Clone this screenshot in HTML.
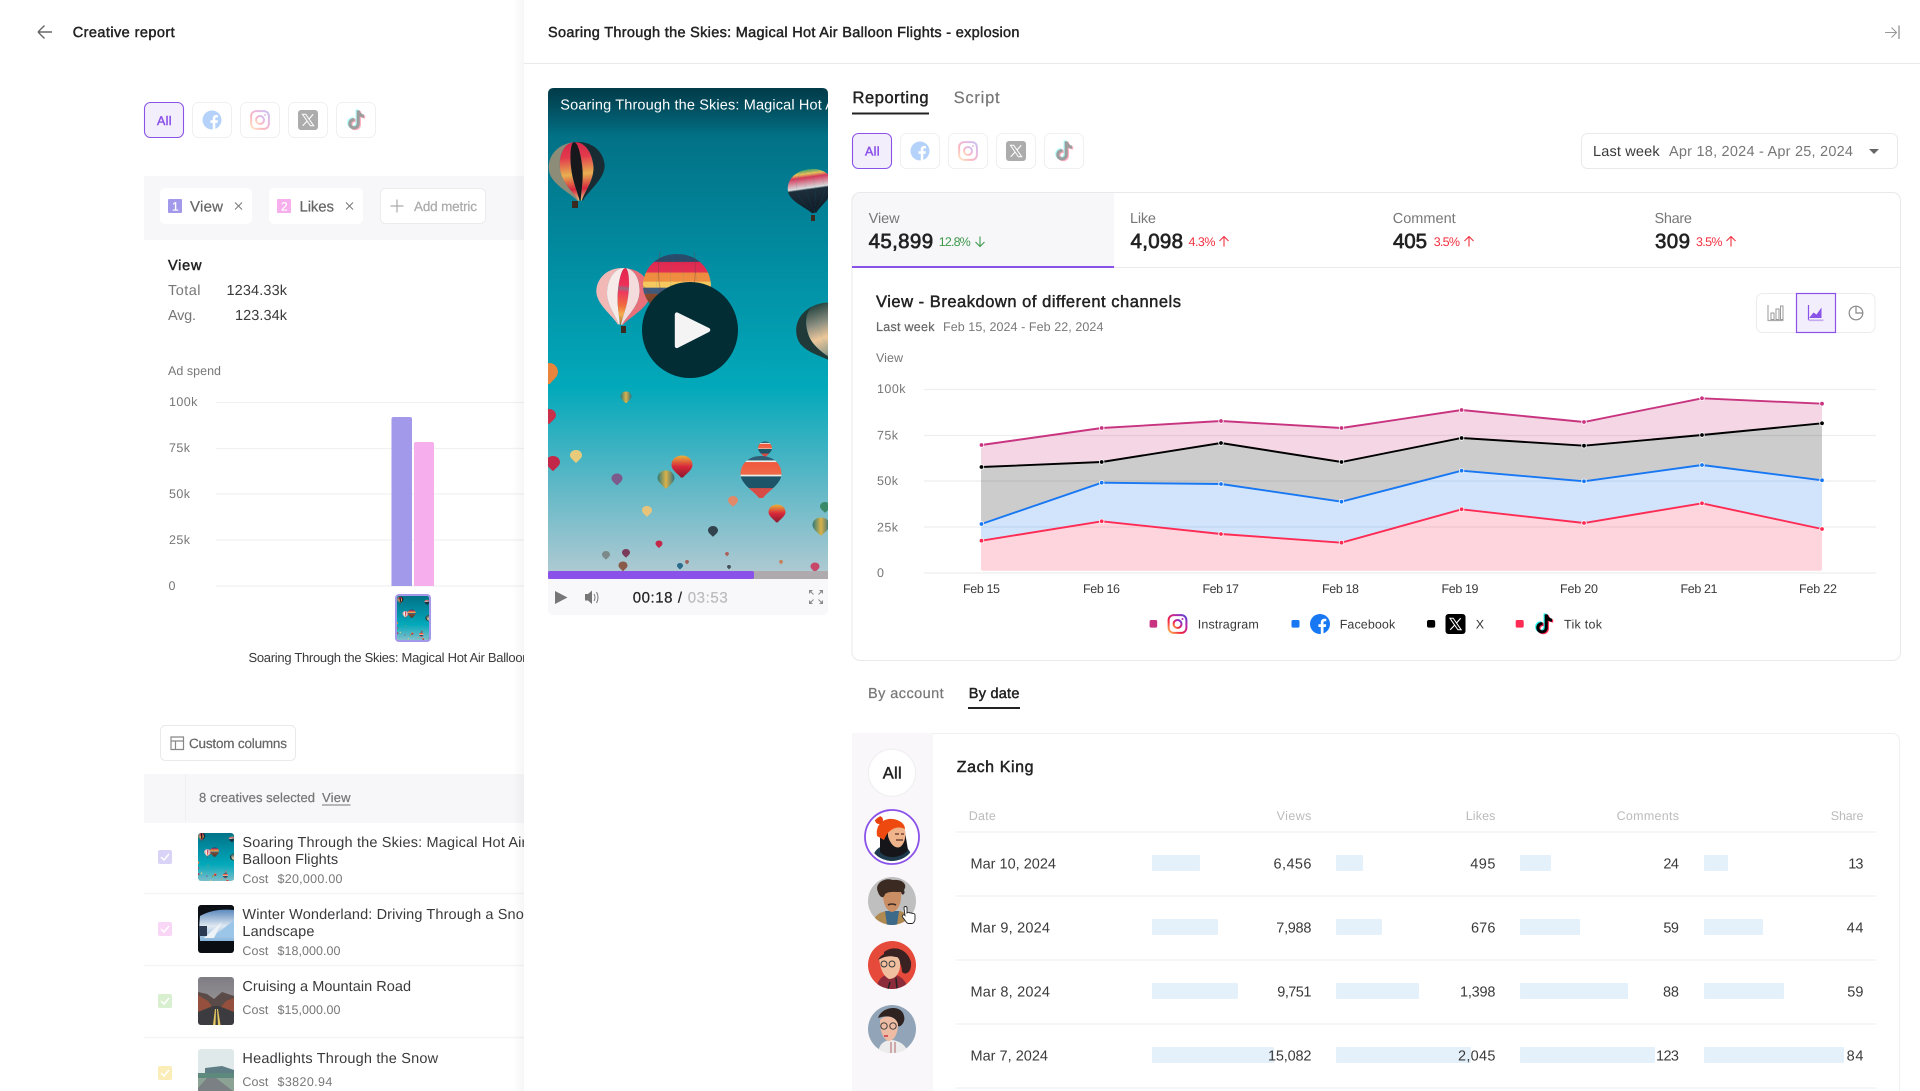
<!DOCTYPE html>
<html lang="en"><head><meta charset="utf-8"><title>Creative report</title>
<style>
html,body{margin:0;padding:0;background:#fff;width:1920px;height:1091px;overflow:hidden}
svg.page{display:block;position:absolute;left:0;top:0}
text{font-family:"Liberation Sans",sans-serif;fill:currentColor;stroke:currentColor;stroke-width:0;text-rendering:geometricPrecision}
.m{stroke-width:.22px}.b{stroke-width:.46px}
.k{color:#222}.d{color:#3a3a3c}.g{color:#777}.l{color:#aaa}.u{color:#bbb}.h{color:#666}
.f12{font-size:12.5px}.f13{font-size:13.5px}.f14{font-size:14.5px}.f15{font-size:15px}.f16{font-size:16.5px}.f20{font-size:20.5px;stroke-width:.7px}
</style></head><body>
<svg class="page" xmlns="http://www.w3.org/2000/svg" width="1920" height="1091" viewBox="0 0 1920 1091">
<defs>
<linearGradient id="sky" x1="0" y1="0" x2="0" y2="1"><stop offset="0" stop-color="#02566a"/><stop offset=".1" stop-color="#027186"/><stop offset=".4" stop-color="#0291a6"/><stop offset=".62" stop-color="#02a9ba"/><stop offset=".8" stop-color="#55b6c5"/><stop offset="1" stop-color="#adc9d2"/></linearGradient>
<linearGradient id="top" x1="0" y1="0" x2="0" y2="1"><stop offset="0" stop-color="#000" stop-opacity=".32"/><stop offset="1" stop-color="#000" stop-opacity="0"/></linearGradient>
<linearGradient id="rb" x1="0" y1="0" x2="0" y2="1"><stop offset="0" stop-color="#d9264a"/><stop offset=".25" stop-color="#e23a4c"/><stop offset=".55" stop-color="#e8b050"/><stop offset=".8" stop-color="#d9263e"/><stop offset="1" stop-color="#e8c880"/></linearGradient>
<linearGradient id="pk" x1="0" y1="0" x2="0" y2="1"><stop offset="0" stop-color="#e2264e"/><stop offset=".3" stop-color="#ee2f58"/><stop offset=".36" stop-color="#9a6a80"/><stop offset=".42" stop-color="#ee3860"/><stop offset=".66" stop-color="#f06a3c"/><stop offset=".82" stop-color="#f4b04c"/><stop offset="1" stop-color="#a07040"/></linearGradient>
<linearGradient id="st" x1="0" y1="0" x2="0" y2="1"><stop offset="0" stop-color="#2a4a6a"/><stop offset=".1" stop-color="#2a4a6a"/><stop offset=".11" stop-color="#e12850"/><stop offset=".24" stop-color="#e22f52"/><stop offset=".25" stop-color="#ee8a40"/><stop offset=".36" stop-color="#ef8f40"/><stop offset=".37" stop-color="#f6c860"/><stop offset=".44" stop-color="#f6c860"/><stop offset=".45" stop-color="#3f5a7c"/><stop offset=".52" stop-color="#3f5a7c"/><stop offset=".53" stop-color="#8a4c2c"/><stop offset="1" stop-color="#54261c"/></linearGradient>
<linearGradient id="rn" x1="0" y1="0" x2="0" y2="1"><stop offset="0" stop-color="#3aa06a"/><stop offset=".1" stop-color="#e8c05a"/><stop offset=".18" stop-color="#d43a5a"/><stop offset=".42" stop-color="#d9dcde"/><stop offset=".46" stop-color="#1d2e3b"/><stop offset="1" stop-color="#0f1b26"/></linearGradient>
<linearGradient id="dk" x1="0" y1="0" x2="0" y2="1"><stop offset="0" stop-color="#26443e"/><stop offset=".3" stop-color="#8a8d80"/><stop offset=".55" stop-color="#eec89a"/><stop offset=".8" stop-color="#9aa08c"/><stop offset="1" stop-color="#3a3a34"/></linearGradient>
<linearGradient id="b6" x1="0" y1="0" x2="0" y2="1"><stop offset="0" stop-color="#2f5f74"/><stop offset=".1" stop-color="#2f5f74"/><stop offset=".11" stop-color="#e8f0ec"/><stop offset=".14" stop-color="#e8f0ec"/><stop offset=".15" stop-color="#f0583e"/><stop offset=".44" stop-color="#ee6a48"/><stop offset=".45" stop-color="#e8ece4"/><stop offset=".48" stop-color="#e8ece4"/><stop offset=".49" stop-color="#1d5468"/><stop offset=".76" stop-color="#1d5468"/><stop offset=".77" stop-color="#d84c48"/><stop offset="1" stop-color="#d84c48"/></linearGradient>
<linearGradient id="b7" x1="0" y1="0" x2="0" y2="1"><stop offset="0" stop-color="#e8b43a"/><stop offset=".5" stop-color="#d8283a"/><stop offset="1" stop-color="#8a1c30"/></linearGradient>
<linearGradient id="b8" x1="0" y1="0" x2="1" y2="0"><stop offset="0" stop-color="#2f7a78"/><stop offset=".5" stop-color="#d9b24a"/><stop offset="1" stop-color="#34707c"/></linearGradient>
<linearGradient id="ig" x1="0" y1="1" x2="1" y2="0"><stop offset="0" stop-color="#fec053"/><stop offset=".35" stop-color="#f2203e"/><stop offset=".7" stop-color="#b729a8"/><stop offset="1" stop-color="#5342d6"/></linearGradient>
<linearGradient id="ps" x1="0" y1="0" x2="1" y2="0"><stop offset="0" stop-color="#000" stop-opacity="0"/><stop offset="1" stop-color="#000" stop-opacity=".035"/></linearGradient>
<linearGradient id="sn" x1="0" y1="0" x2="0" y2="1"><stop offset="0" stop-color="#4e7fb8"/><stop offset=".55" stop-color="#dfe9f2"/><stop offset="1" stop-color="#86b4dd"/></linearGradient>
<linearGradient id="rd" x1="0" y1="0" x2="0" y2="1"><stop offset="0" stop-color="#7f7d84"/><stop offset="1" stop-color="#a9a3a2"/></linearGradient>

<path id="bp" d="M0-10C6-10 10-6 10-1 10 4 3 8 1 11L-1 11C-3 8-10 4-10-1-10-6-6-10 0-10Z"/>
<path id="g1" d="M0-10C-3.6-10-6-6-6-1C-6 4-1.800 8-.6 11L-1 11C-3 8-10 4-10-1C-10-6-6-10 0-10Z"/>
<path id="g2" d="M0-10C-1.200-10-2-6-2-1C-2 4-.6 8-.2 11L-.6 11C-1.800 8-6 4-6-1C-6-6-3.600-10 0-10Z"/>
<path id="g3" d="M0-10C1.200-10 2-6 2-1C2 4 .6 8 .2 11L-.2 11C-.6 8-2 4-2-1C-2-6-1.200-10 0-10Z"/>
<path id="g4" d="M0-10C3.600-10 6-6 6-1C6 4 1.800 8 .6 11L.2 11C.6 8 2 4 2-1C2-6 1.200-10 0-10Z"/>
<path id="g5" d="M0-10C6-10 10-6 10-1C10 4 3 8 1 11L.6 11C1.800 8 6 4 6-1C6-6 3.600-10 0-10Z"/>
<symbol id="fb" viewBox="0 0 20 20"><circle cx="10" cy="10" r="10" fill="#1877f2"/><path fill="#fff" d="M13.5 20v-7h2.300l.4-2.800h-2.700V8.600c0-.8.3-1.300 1.400-1.300h1.400V4.900c-.3 0-1.100-.1-2-.1-2.100 0-3.500 1.300-3.500 3.600v1.800H8.400V13h2.400v7z"/></symbol>
<symbol id="in" viewBox="0 0 20 20"><rect x="1.100" y="1.100" width="17.800" height="17.800" rx="5" fill="#fff" stroke="url(#ig)" stroke-width="2"/><circle cx="10" cy="10" r="4" fill="none" stroke="url(#ig)" stroke-width="2"/><circle cx="15" cy="5" r="1" fill="#b729a8"/></symbol>
<symbol id="xx" viewBox="0 0 20 20"><rect width="20" height="20" rx="3" fill="#000"/><path d="M4.400 4.200h3.300l8 11.600h-3.300z" fill="none" stroke="#fff" stroke-width="1"/><path d="M15.200 4.200l-4.400 5M9 11.200l-4.300 4.600" fill="none" stroke="#fff" stroke-width="1.100"/></symbol>
<path id="tkp" d="M10.600 1.600h2.700c.2 2 1.600 3.500 3.700 3.700v2.700c-1.400 0-2.700-.4-3.700-1.200v6.400c0 3-2.300 5-5 5s-5-2-5-5 2.600-5.200 5.400-4.800v2.800c-1.400-.4-2.700.6-2.700 2s1 2.300 2.300 2.300 2.300-1 2.300-2.400z"/>
<symbol id="tk" viewBox="0 0 20 20"><use href="#tkp" fill="#25f4ee" transform="translate(-1 -.7)"/><use href="#tkp" fill="#fe2c55" transform="translate(1 .7)"/><use href="#tkp" fill="#000"/></symbol>

<g id="scene">
<rect x="548" y="88" width="280" height="483" fill="url(#sky)"/>
<rect x="548" y="88" width="280" height="48" fill="url(#top)"/>
<!-- big dark balloon -->
<g transform="translate(577 170) rotate(-6) scale(2.8)"><use href="#g1" fill="#8c8c78"/><use href="#g2" fill="url(#rb)"/><use href="#g3" fill="#17181b"/><use href="#g4" fill="url(#rb)"/><use href="#g5" fill="#1a2c33"/></g>
<rect x="572" y="201" width="6" height="7" fill="#3a2a20"/>
<!-- top right -->
<g transform="translate(811 190) rotate(-8) scale(2.3 2.1)"><use href="#g1" fill="url(#rn)"/><use href="#g2" fill="url(#rn)"/><use href="#g3" fill="url(#rn)"/><use href="#g4" fill="url(#rn)"/><use href="#g5" fill="url(#rn)"/></g>
<rect x="811" y="215" width="4" height="6" fill="#3a2a20"/>
<!-- white pink -->
<g transform="translate(623 295) rotate(5) scale(2.7)"><use href="#g1" fill="#f2b8b6"/><use href="#g2" fill="#f6ebe8"/><use href="#g3" fill="url(#pk)"/><use href="#g4" fill="#f4dcdc"/><use href="#g5" fill="#e8707a"/></g>
<rect x="621" y="326" width="5" height="7" fill="#3a2a20"/>
<!-- striped -->
<g transform="translate(677 290) scale(3.4 3.600)"><use href="#g1" fill="url(#st)"/><use href="#g2" fill="url(#st)"/><use href="#g3" fill="url(#st)"/><use href="#g4" fill="url(#st)"/><use href="#g5" fill="url(#st)"/></g>
<path d="M660 252Q654 284 671 328M694 252Q700 284 681 328M643 286Q660 300 676 332M711 286Q694 300 678 332" stroke="#7a3a3a" stroke-opacity=".35" fill="none"/>
<!-- right dark -->
<g transform="translate(826 332) rotate(-20) scale(2.9)"><use href="#g1" fill="#1f3a38"/><use href="#g2" fill="url(#dk)"/><use href="#g3" fill="url(#dk)"/><use href="#g4" fill="url(#dk)"/><use href="#g5" fill="url(#dk)"/></g>
<use href="#bp" fill="#e8843c" transform="translate(549 373) scale(.9 1)"/>
<use href="#bp" fill="url(#b8)" transform="translate(626 397) scale(.55)"/>
<use href="#bp" fill="#c9304a" transform="translate(549 416) scale(.7)"/>
<use href="#bp" fill="#c42848" transform="translate(553 463) scale(.7)"/>
<use href="#bp" fill="#e8cb7a" transform="translate(576 456) scale(.6)"/>
<use href="#bp" fill="#7d5a8c" transform="translate(617 479) scale(.55)"/>
<use href="#bp" fill="url(#b8)" transform="translate(666 479) scale(.85)"/>
<use href="#bp" fill="url(#b7)" transform="translate(682 466) scale(1.050)"/>
<use href="#bp" fill="url(#b6)" transform="translate(765 449) scale(.7 .75)"/>
<use href="#bp" fill="url(#b6)" transform="translate(761 476) scale(2.050 2)"/>
<use href="#bp" fill="#e08a6a" transform="translate(733 501) scale(.5)"/>
<use href="#bp" fill="url(#b7)" transform="translate(777 513) scale(.85)"/>
<use href="#bp" fill="#e8c47a" transform="translate(647 511) scale(.5)"/>
<use href="#bp" fill="#32424e" transform="translate(713 531) scale(.5)"/>
<use href="#bp" fill="url(#b8)" transform="translate(821 526) scale(.85)"/>
<use href="#bp" fill="#3a8a6a" transform="translate(825 507) scale(.5)"/>
<use href="#bp" fill="#c42848" transform="translate(659 544) scale(.35)"/>
<use href="#bp" fill="#7a3a5a" transform="translate(626 553) scale(.4)"/>
<use href="#bp" fill="#7d8a8a" transform="translate(606 555) scale(.4)"/>
<use href="#bp" fill="#8a5a4a" transform="translate(623 566) scale(.45)"/>
<use href="#bp" fill="#2a6a8a" transform="translate(680 566) scale(.3)"/>
<use href="#bp" fill="#c8486a" transform="translate(815 567) scale(.45)"/>
<use href="#bp" fill="#b0605a" transform="translate(727 554) scale(.2)"/>
<use href="#bp" fill="#c8805a" transform="translate(781 562) scale(.2)"/>
<use href="#bp" fill="#44505a" transform="translate(729 567) scale(.2)"/>
<use href="#bp" fill="#a0605a" transform="translate(687 562) scale(.2)"/>
</g>
<clipPath id="lc"><rect x="0" y="0" width="524" height="1091"/></clipPath>
<clipPath id="vc"><path d="M554 88H822Q828 88 828 94V571H548V94Q548 88 554 88Z"/></clipPath>
<clipPath id="vt"><rect x="548" y="88" width="280" height="40"/></clipPath>
<clipPath id="t0"><rect x="397" y="596" width="32" height="44" rx="2"/></clipPath>
<clipPath id="t1"><rect x="198" y="833" width="36" height="48" rx="3"/></clipPath>
<clipPath id="t2"><rect x="198" y="905" width="36" height="48" rx="3"/></clipPath>
<clipPath id="t3"><rect x="198" y="977" width="36" height="48" rx="3"/></clipPath>
<clipPath id="t4"><rect x="198" y="1049" width="36" height="48" rx="3"/></clipPath>
<clipPath id="a1"><circle cx="892" cy="837" r="24"/></clipPath>
<clipPath id="a2"><circle cx="892" cy="901" r="24"/></clipPath>
<clipPath id="a3"><circle cx="892" cy="965" r="24"/></clipPath>
<clipPath id="a4"><circle cx="892" cy="1029" r="24"/></clipPath>
</defs>

<rect width="1920" height="1091" fill="#fff"/>

<!-- LEFT PANEL -->
<g clip-path="url(#lc)">
<path d="M52 32H38M38 32l6.500-6.500M38 32l6.500 6.500" fill="none" stroke="#666" stroke-width="1.400"/>
<text x="72.700" y="37" class="f14 b k" textLength="102">Creative report</text>

<rect x="144.500" y="102.500" width="39" height="35" rx="6" fill="#f3eefb" stroke="#8a52e9" stroke-width="1.100"/>
<text x="157" y="125" class="f12 b" style="color:#8a52e9" textLength="14.500">All</text>
<rect x="192.500" y="102.500" width="39" height="35" rx="6" fill="#fff" stroke="#f0eff1"/>
<rect x="240.500" y="102.500" width="39" height="35" rx="6" fill="#fff" stroke="#f0eff1"/>
<rect x="288.500" y="102.500" width="39" height="35" rx="6" fill="#fff" stroke="#f0eff1"/>
<rect x="336.500" y="102.500" width="39" height="35" rx="6" fill="#fff" stroke="#f0eff1"/>
<use href="#fb" x="202.500" y="110.500" width="19" height="19" opacity=".32"/>
<use href="#in" x="250" y="110" width="20" height="20" opacity=".32"/>
<use href="#xx" x="298" y="110" width="20" height="20" opacity=".32"/>
<use href="#tk" x="344.500" y="108.500" width="23" height="23" opacity=".38"/>

<rect x="144" y="176" width="380" height="64" fill="#f7f6f8"/>
<rect x="160" y="188" width="92" height="36" rx="5" fill="#fff"/>
<rect x="269" y="188" width="94" height="36" rx="5" fill="#fff"/>
<rect x="380.500" y="188.500" width="105" height="35" rx="5" fill="#fff" stroke="#ececee"/>
<rect x="168" y="199" width="14" height="14" rx="1" fill="#a399ea"/><text x="172" y="210.500" style="font-size:12px;color:#fff" class="m">1</text>
<rect x="277" y="199" width="14" height="14" rx="1" fill="#f6aeec"/><text x="281" y="210.500" style="font-size:12px;color:#fff" class="m">2</text>
<text x="190" y="211.500" class="f15 m h" textLength="33">View</text>
<text x="299.500" y="211.500" class="f15 m h" textLength="34.500">Likes</text>
<path d="M235 202.500l7 7M242 202.500l-7 7M346 202.500l7 7M353 202.500l-7 7" stroke="#777" stroke-width="1" fill="none"/>
<path d="M397 199.500v13M390.500 206h13" stroke="#aaa" stroke-width="1.200" fill="none"/>
<text x="414" y="211" class="f13 m l" textLength="63">Add metric</text>

<text x="168" y="270" class="f14 b k" textLength="33.500">View</text>
<text x="168" y="295" class="f14 g" textLength="32.500">Total</text>
<text x="226.500" y="295" class="f14 d" textLength="60.500">1234.33k</text>
<text x="168" y="320" class="f14 g" textLength="28">Avg.</text>
<text x="235" y="320" class="f14 d" textLength="52">123.34k</text>

<text x="168" y="375" class="f12 g" textLength="53">Ad spend</text>
<g stroke="#f1f1f2" stroke-width="1.200"><path d="M216 402.500H524M216 448.500H524M216 494H524M216 540H524M216 586H524"/></g>
<g class="f12 g"><text x="169" y="406" textLength="28.400">100k</text><text x="169" y="452" textLength="21">75k</text><text x="169" y="498" textLength="21">50k</text><text x="169" y="544" textLength="21">25k</text><text x="168.500" y="590" textLength="6.500">0</text></g>
<path d="M391.500 586V419q0-2 2-2h16.500q2 0 2 2V586Z" fill="#a399ea"/>
<path d="M414 586V444q0-2 2-2h16q2 0 2 2V586Z" fill="#f6aeec"/>
<g clip-path="url(#t0)"><svg x="397" y="596" width="32" height="44" viewBox="548 88 280 483" preserveAspectRatio="xMidYMid slice"><use href="#scene"/></svg></g>
<rect x="396" y="595" width="34" height="46" rx="3" fill="none" stroke="#a399ea" stroke-width="2"/>
<text x="248.500" y="662" class="f13 d" style="font-size:13px" textLength="281">Soaring Through the Skies: Magical Hot Air Balloon</text>

<rect x="160.500" y="725.500" width="135" height="35" rx="5" fill="#fff" stroke="#e9e9eb"/>
<path d="M171 737h12.500v12.500H171zM171 741h12.500M175.500 741v8.500" fill="none" stroke="#888" stroke-width="1.200"/>
<text x="189" y="748" class="f13 m h" textLength="98">Custom columns</text>

<rect x="144" y="774" width="380" height="49" fill="#f7f6f8"/>
<path d="M185.500 774V821" stroke="#efeef0" fill="none"/>
<text x="199" y="802" class="f13 m g" style="font-size:13px" textLength="116">8 creatives selected</text>
<text x="322" y="802" class="f13 m g" style="font-size:13px" textLength="28.500">View</text>
<path d="M322 805H350.500" stroke="#777" fill="none"/>

<g stroke="#f5f4f6" stroke-width="1.500"><path d="M144 893.500H524M144 965.500H524M144 1037.500H524"/></g>
<rect x="158" y="850" width="14" height="14" rx="2" fill="#d9d3f7"/><path d="M161 857l3 3 5-6" stroke="#fff" stroke-width="1.500" fill="none"/>
<rect x="158" y="922" width="14" height="14" rx="2" fill="#fad6f6"/><path d="M161 929l3 3 5-6" stroke="#fff" stroke-width="1.500" fill="none"/>
<rect x="158" y="994" width="14" height="14" rx="2" fill="#d8efd0"/><path d="M161 1001l3 3 5-6" stroke="#fff" stroke-width="1.500" fill="none"/>
<rect x="158" y="1066" width="14" height="14" rx="2" fill="#faedb8"/><path d="M161 1073l3 3 5-6" stroke="#fff" stroke-width="1.500" fill="none"/>

<g clip-path="url(#t1)"><svg x="198" y="833" width="36" height="48" viewBox="548 88 280 483" preserveAspectRatio="xMidYMid slice"><use href="#scene"/></svg></g>
<g clip-path="url(#t2)"><rect x="198" y="905" width="36" height="48" fill="#0a0d12"/><path d="M199 919Q200 912 208 911L234 908V941H200Z" fill="url(#sn)"/><path d="M198 911Q214 905 234 906V910Q214 908 200 916L198 940Z" fill="#0c1118"/><path d="M214 936L234 920V938Z" fill="#9cc6e8"/><path d="M204 938L222 922L214 938Z" fill="#eef3f8"/><rect x="199" y="926" width="8" height="10" fill="#2a3a52"/></g>
<g clip-path="url(#t3)"><rect x="198" y="977" width="36" height="48" fill="url(#rd)"/><path d="M198 992L207 994L214 999L222 992L234 996V1012H198Z" fill="#5a4a48"/><path d="M198 995L208 1001L213 1008H220L226 1001L234 998V1012H198Z" fill="#94503c"/><path d="M198 1012L213 1006H219L234 1012V1025H198Z" fill="#3c3c40"/><path d="M215 1009L213 1025H215.500L216 1009ZM217 1009L218 1025H220.500L218 1009Z" fill="#e8c860"/></g>
<g clip-path="url(#t4)"><rect x="198" y="1049" width="36" height="48" fill="#dfe9ea"/><path d="M205 1068L222 1066L234 1070V1078H205Z" fill="#5f7d84"/><rect x="198" y="1073" width="36" height="6" fill="#5d8a7c"/><path d="M198 1078H234V1097H198Z" fill="#8ba294"/><path d="M207 1078H216L234 1092V1097H198V1088Z" fill="#7a8083"/></g>

<text x="242.400" y="847" class="f14 d" textLength="284">Soaring Through the Skies: Magical Hot Air</text>
<text x="242.400" y="864" class="f14 d" textLength="95.700">Balloon Flights</text>
<text x="242.400" y="883" class="f12 g" textLength="26">Cost</text><text x="277.500" y="883" class="f12 g" textLength="65">$20,000.00</text>
<text x="242.400" y="919" class="f14 d" textLength="292">Winter Wonderland: Driving Through a Snow</text>
<text x="242.400" y="936" class="f14 d" textLength="72">Landscape</text>
<text x="242.400" y="955" class="f12 g" textLength="26">Cost</text><text x="277.500" y="955" class="f12 g" textLength="63">$18,000.00</text>
<text x="242.400" y="991" class="f14 d" textLength="168.700">Cruising a Mountain Road</text>
<text x="242.400" y="1014" class="f12 g" textLength="26">Cost</text><text x="277.500" y="1014" class="f12 g" textLength="63">$15,000.00</text>
<text x="242.400" y="1063" class="f14 d" textLength="195.700">Headlights Through the Snow</text>
<text x="242.400" y="1086" class="f12 g" textLength="26">Cost</text><text x="277.500" y="1086" class="f12 g" textLength="54.800">$3820.94</text>
</g>
<rect x="512" y="0" width="12" height="1091" fill="url(#ps)"/>

<!-- RIGHT PANEL -->
<path d="M524 63.500H1920" stroke="#e9e9eb" fill="none"/>
<text x="548" y="37" class="f14 b k" textLength="471.500">Soaring Through the Skies: Magical Hot Air Balloon Flights - explosion</text>
<path d="M1885 32.500H1896M1891.500 27.500l5 5-5 5" stroke="#999" stroke-width="1.100" fill="none"/><path d="M1899 25.500V39" stroke="#999" stroke-width="1.400" fill="none"/>

<!-- video -->
<g clip-path="url(#vc)"><use href="#scene"/></g>
<g clip-path="url(#vt)"><text x="560.300" y="109.500" class="f14" style="color:#fff" textLength="283">Soaring Through the Skies: Magical Hot Air</text></g>
<circle cx="690" cy="330" r="48" fill="#032d35"/>
<path d="M677.500 312.500L709 328a2.200 2.200 0 010 4L677.500 348a2 2 0 01-2.700-1.900V314.400a2 2 0 012.700-1.900Z" fill="#f4f4f5"/>
<path d="M548 579H828V609Q828 615 822 615H554Q548 615 548 609Z" fill="#f8f7f9"/>
<rect x="548" y="571" width="280" height="8" fill="#aeaaae"/>
<rect x="548" y="571" width="206" height="8" rx="2" fill="#8a52e9"/>
<path d="M555 591L567.500 597.500 555 604Z" fill="#777"/>
<path d="M585 594H588L592 590.500V604L588 600.500H585Z" fill="#777"/><path d="M594 594Q596 597.500 594 601M596.500 592Q599.500 597.500 596.500 603" stroke="#777" stroke-width="1" fill="none"/>
<text x="632.700" y="602.500" class="f15 m k" textLength="49.300">00:18 /</text>
<text x="687.700" y="602.500" class="f15 m u" textLength="40">03:53</text>
<path d="M809 590h4l-4 4zM823 590h-4l4 4zM809 604h4l-4-4zM823 604h-4l4-4z" fill="#8a8a8a"/><path d="M811 592l2.500 2.500M821 592l-2.500 2.500M811 602l2.500-2.500M821 602l-2.500-2.500" stroke="#8a8a8a" fill="none"/>

<!-- tabs -->
<text x="852.500" y="103" class="f16 b k" textLength="76">Reporting</text>
<text x="953.600" y="103" class="f16 m g" textLength="46">Script</text>
<rect x="852" y="112.500" width="77" height="2" fill="#222"/>

<rect x="852.500" y="133.500" width="39" height="35" rx="6" fill="#f3eefb" stroke="#8a52e9" stroke-width="1.100"/>
<text x="865" y="155.500" class="f12 b" style="color:#8a52e9" textLength="14.500">All</text>
<rect x="900.500" y="133.500" width="39" height="35" rx="6" fill="#fff" stroke="#f0eff1"/>
<rect x="948.500" y="133.500" width="39" height="35" rx="6" fill="#fff" stroke="#f0eff1"/>
<rect x="996.500" y="133.500" width="39" height="35" rx="6" fill="#fff" stroke="#f0eff1"/>
<rect x="1044.500" y="133.500" width="39" height="35" rx="6" fill="#fff" stroke="#f0eff1"/>
<use href="#fb" x="910.500" y="141.500" width="19" height="19" opacity=".32"/>
<use href="#in" x="958" y="141" width="20" height="20" opacity=".32"/>
<use href="#xx" x="1006" y="141" width="20" height="20" opacity=".32"/>
<use href="#tk" x="1052.500" y="139.500" width="23" height="23" opacity=".38"/>

<rect x="1581.500" y="133.500" width="316" height="35" rx="6" fill="#fff" stroke="#e9e9eb"/>
<text x="1593" y="156" class="f14 d" textLength="66.600">Last week</text>
<text x="1669" y="156" class="f14 g" textLength="184">Apr 18, 2024 - Apr 25, 2024</text>
<path d="M1869 149H1879L1874 154Z" fill="#666"/>

<!-- stats card -->
<path d="M1114 192.500H860Q852 192.500 852 200.500V267H1114Z" fill="#f7f6f8"/>
<rect x="852" y="192.500" width="1048.500" height="468" rx="8" fill="none" stroke="#e9e9eb"/>
<path d="M852 267.500H1900" stroke="#e9e9eb" fill="none"/>
<rect x="852" y="266" width="262" height="2" fill="#8a52e9"/>

<text x="868.600" y="223" class="f14 g" textLength="31">View</text>
<text x="868.600" y="248" class="f20 b k" textLength="64.500">45,899</text>
<text x="938.800" y="246" class="f12" style="color:#3f9a4d" textLength="32">12.8%</text>
<path d="M980 236.500V246.500M975.500 242l4.500 4.500 4.500-4.500" stroke="#3f9a4d" stroke-width="1.100" fill="none"/>
<text x="1130" y="223" class="f14 g" textLength="26">Like</text>
<text x="1130.500" y="248" class="f20 b k" textLength="52.500">4,098</text>
<text x="1188.500" y="246" class="f12" style="color:#f0313f" textLength="27">4.3%</text>
<path d="M1224 246.500V236.500M1219.500 241l4.500-4.500 4.500 4.500" stroke="#f0313f" stroke-width="1.100" fill="none"/>
<text x="1392.700" y="223" class="f14 g" textLength="63">Comment</text>
<text x="1393" y="248" class="f20 b k" textLength="34">405</text>
<text x="1433.700" y="246" class="f12" style="color:#f0313f" textLength="26.300">3.5%</text>
<path d="M1469 246.500V236.500M1464.500 241l4.500-4.500 4.500 4.500" stroke="#f0313f" stroke-width="1.100" fill="none"/>
<text x="1654.500" y="223" class="f14 g" textLength="37.500">Share</text>
<text x="1655" y="248" class="f20 b k" textLength="35">309</text>
<text x="1696" y="246" class="f12" style="color:#f0313f" textLength="26.500">3.5%</text>
<path d="M1731 246.500V236.500M1726.500 241l4.500-4.500 4.500 4.500" stroke="#f0313f" stroke-width="1.100" fill="none"/>

<text x="876" y="307" class="f16 b k" textLength="305">View - Breakdown of different channels</text>
<text x="876" y="331" class="f12 m h" textLength="58.500">Last week</text>
<text x="943" y="331" class="f12 g" textLength="160.400">Feb 15, 2024 - Feb 22, 2024</text>

<rect x="1756.500" y="293.500" width="118.500" height="39" rx="6" fill="#fff" stroke="#ececee"/>
<rect x="1796.500" y="293.500" width="39" height="39" fill="#f3eefb" stroke="#8a52e9" stroke-width="1.200"/>
<path d="M1768 305v15.500h15.500" stroke="#aaa" stroke-width="1.200" fill="none"/><path d="M1771 313h3v6.500h-3zM1776 309h3v10.500h-3zM1780.500 306h2.500v13.500h-2.500z" fill="none" stroke="#999" stroke-width="1"/>
<path d="M1808.500 305v15" stroke="#8a52e9" stroke-width="1.200" fill="none"/><path d="M1809.500 317.500l4-5 3 2 5-7V318h-12Z" fill="#8a52e9"/><rect x="1808.500" y="319.500" width="15" height="1.600" fill="#c4a8f2"/>
<circle cx="1856" cy="313" r="6.800" fill="none" stroke="#888" stroke-width="1.200"/><path d="M1856 306.200V313H1862.800" fill="none" stroke="#888" stroke-width="1.200"/>

<!-- chart -->
<text x="876" y="362" class="f12 g" textLength="27">View</text>
<g stroke="#eeeeef" stroke-width="1.200"><path d="M924 389.500H1876M924 435.500H1876M924 481H1876M924 527H1876M924 573H1876"/></g>
<g class="f12 g"><text x="877" y="393" textLength="28.500">100k</text><text x="877" y="439.500" textLength="21">75k</text><text x="877" y="485" textLength="21">50k</text><text x="877" y="531.500" textLength="21">25k</text><text x="877" y="577" textLength="6.500">0</text></g>

<path d="M981 445L1101.700 428 1221 421 1341.500 428 1461.600 410 1584 422 1702 398.300 1822 403.700V423.300L1702 435 1584 445.700 1461.600 438 1341.500 462 1221 443 1101.700 462 981 467Z" fill="#c8347f" fill-opacity=".2"/>
<path d="M981 467L1101.700 462 1221 443 1341.500 462 1461.600 438 1584 445.700 1702 435 1822 423.300V480.300L1702 465 1584 481.300 1461.600 470.700 1341.500 501.700 1221 484 1101.700 482.700 981 524Z" fill="#000" fill-opacity=".2"/>
<path d="M981 524L1101.700 482.700 1221 484 1341.500 501.700 1461.600 470.700 1584 481.300 1702 465 1822 480.300V529L1702 503.300 1584 523 1461.600 509.300 1341.500 542.700 1221 534 1101.700 521.300 981 540.700Z" fill="#1877f2" fill-opacity=".2"/>
<path d="M981 540.700L1101.700 521.300 1221 534 1341.500 542.700 1461.600 509.300 1584 523 1702 503.300 1822 529V568.700Q1822 570.700 1820 570.700H983Q981 570.700 981 568.700Z" fill="#fe2c55" fill-opacity=".2"/>
<g fill="none" stroke-width="1.900">
<polyline stroke="#c8347f" points="981.500,445 1101.700,428 1221,421 1341.500,428 1461.600,410 1584,422 1702,398.300 1822,403.700"/>
<polyline stroke="#000" points="981.500,467 1101.700,462 1221,443 1341.500,462 1461.600,438 1584,445.700 1702,435 1822,423.300"/>
<polyline stroke="#1877f2" points="981.500,524 1101.700,482.700 1221,484 1341.500,501.700 1461.600,470.700 1584,481.300 1702,465 1822,480.300"/>
<polyline stroke="#fe2c55" points="981.500,540.700 1101.700,521.300 1221,534 1341.500,542.700 1461.600,509.300 1584,523 1702,503.300 1822,529"/>
</g>
<g stroke="#fff" stroke-width=".8">
<g fill="#c8347f"><circle cx="981.500" cy="445" r="2.300"/><circle cx="1101.700" cy="428" r="2.300"/><circle cx="1221" cy="421" r="2.300"/><circle cx="1341.500" cy="428" r="2.300"/><circle cx="1461.600" cy="410" r="2.300"/><circle cx="1584" cy="422" r="2.300"/><circle cx="1702" cy="398.300" r="2.300"/><circle cx="1822" cy="403.700" r="2.300"/></g>
<g fill="#000"><circle cx="981.500" cy="467" r="2.300"/><circle cx="1101.700" cy="462" r="2.300"/><circle cx="1221" cy="443" r="2.300"/><circle cx="1341.500" cy="462" r="2.300"/><circle cx="1461.600" cy="438" r="2.300"/><circle cx="1584" cy="445.700" r="2.300"/><circle cx="1702" cy="435" r="2.300"/><circle cx="1822" cy="423.300" r="2.300"/></g>
<g fill="#1877f2"><circle cx="981.500" cy="524" r="2.300"/><circle cx="1101.700" cy="482.700" r="2.300"/><circle cx="1221" cy="484" r="2.300"/><circle cx="1341.500" cy="501.700" r="2.300"/><circle cx="1461.600" cy="470.700" r="2.300"/><circle cx="1584" cy="481.300" r="2.300"/><circle cx="1702" cy="465" r="2.300"/><circle cx="1822" cy="480.300" r="2.300"/></g>
<g fill="#fe2c55"><circle cx="981.500" cy="540.700" r="2.300"/><circle cx="1101.700" cy="521.300" r="2.300"/><circle cx="1221" cy="534" r="2.300"/><circle cx="1341.500" cy="542.700" r="2.300"/><circle cx="1461.600" cy="509.300" r="2.300"/><circle cx="1584" cy="523" r="2.300"/><circle cx="1702" cy="503.300" r="2.300"/><circle cx="1822" cy="529" r="2.300"/></g>
</g>
<g class="f12 d"><text x="963" y="593" textLength="37">Feb 15</text><text x="1083" y="593" textLength="37">Feb 16</text><text x="1202.500" y="593" textLength="36.500">Feb 17</text><text x="1322" y="593" textLength="37">Feb 18</text><text x="1441.500" y="593" textLength="37">Feb 19</text><text x="1560" y="593" textLength="38">Feb 20</text><text x="1680.500" y="593" textLength="37">Feb 21</text><text x="1799" y="593" textLength="38">Feb 22</text></g>

<rect x="1149.600" y="620" width="7.600" height="7.600" rx="1.500" fill="#c8347f"/><use href="#in" x="1167.500" y="614" width="20" height="20"/>
<text x="1197.800" y="628.500" class="f12 d" textLength="61">Instragram</text>
<rect x="1291.500" y="620" width="8" height="7.600" rx="1.500" fill="#1877f2"/><use href="#fb" x="1310" y="614" width="20" height="20"/>
<text x="1339.700" y="628.500" class="f12 d" textLength="55.500">Facebook</text>
<rect x="1427" y="620" width="8.200" height="7.600" rx="2" fill="#000"/><use href="#xx" x="1445.500" y="614" width="20" height="20"/>
<text x="1475.700" y="628.500" class="f12 d" textLength="7.500">X</text>
<rect x="1515.700" y="620" width="8" height="7.600" rx="1.500" fill="#fe2c55"/><use href="#tk" x="1532.500" y="612.500" width="23" height="23"/>
<text x="1564" y="628.500" class="f12 d" textLength="38">Tik tok</text>

<!-- sub tabs -->
<text x="868" y="698" class="f14 m g" textLength="75.700">By account</text>
<text x="968.800" y="698" class="f14 b k" textLength="50.600">By date</text>
<rect x="968" y="707" width="52" height="2" fill="#222"/>

<!-- table card -->
<path d="M932 1091V733.500H1891.500Q1899.500 733.500 1899.500 741.500V1091" fill="none" stroke="#f0eff1"/>
<path d="M852 733H932V1091H852Z" fill="#f9f7f9"/>
<circle cx="892" cy="772.700" r="23.500" fill="#fff" stroke="#eeedef"/>
<text x="882.700" y="778.500" class="f16 b k" textLength="19">All</text>

<circle cx="892" cy="837" r="27" fill="#fff" stroke="#8a52e9" stroke-width="1.800"/>
<g clip-path="url(#a1)">
<rect x="868" y="813" width="48" height="48" fill="#fff"/>
<path d="M872 861C873 850 880 846 886 845L905 846C910 850 912 855 912 861Z" fill="#1e3a4c"/>
<path d="M880 827L880 852C887 860 902 858 908 850L904 826Z" fill="#16161a"/>
<path d="M888 828L904 826C907 834 905 844 900 847 895 849 890 844 888 836Z" fill="#efb48c"/>
<path d="M877 836C875 823 886 816 897 820 903 822 905 826 905 829 897 825 888 829 884 840Z" fill="#ee4a10"/>
<circle cx="879" cy="820" r="4" fill="#e8420e"/>
<path d="M896 840h7M895 834h4M901 834h3" stroke="#5a2f20" stroke-width="1.200" fill="none"/>
</g>
<g clip-path="url(#a2)">
<rect x="868" y="877" width="48" height="48" fill="#bfbfc0"/>
<path d="M872 925C874 915 880 912 887 911L900 911C906 913 912 918 914 925Z" fill="#b08a50"/>
<path d="M885 911L899 911 897 925H887Z" fill="#3e6a8a"/>
<path d="M883 890C884 888 899 886 901 892 902 901 899 911 892 912 886 911 882 902 883 890Z" fill="#c98e63"/>
<path d="M878 892C874 884 884 877 893 880 902 879 908 884 904 890 906 894 902 897 901 892 895 892 889 891 885 894 884 899 880 898 878 892Z" fill="#3a2a22"/>
<path d="M888 905q4-2 8 0" stroke="#3a2a22" stroke-width="1.600" fill="none"/>
</g>
<path d="M904 908c0-2 3-2 3 0v5l1-.5c1-.5 2 0 2 .5 1-.5 2 0 2 .5 1-.5 3 0 3 1.500v4c0 2-1.500 4.500-3 4.500h-3.500c-1.500 0-2-1-3-2.500l-3-4c-1-1.500 1-3 2.500-1.500z" fill="#fff" stroke="#222" stroke-width=".9"/>
<g clip-path="url(#a3)">
<rect x="868" y="941" width="48" height="48" fill="#e64a3a"/>
<path d="M876 989C878 978 884 974 892 974 900 975 906 980 908 989Z" fill="#8d2b3a"/>
<path d="M884 952C895 944 908 950 911 962 912 972 906 976 902 972 902 962 896 955 884 958Z" fill="#3a2222"/>
<path d="M879 958C884 951 898 952 900 962 901 972 896 979 889 979 883 976 880 968 879 958Z" fill="#f0bfa0"/>
<path d="M878 960C882 951 896 950 902 958L896 957C889 955 883 957 878 960Z" fill="#3a2222"/>
<circle cx="884" cy="964" r="3" fill="none" stroke="#333" stroke-width=".9"/><circle cx="892" cy="964" r="3" fill="none" stroke="#333" stroke-width=".9"/>
<path d="M890 982l-2 7M896 978l1 11" stroke="#222" stroke-width="1.500"/>
</g>
<g clip-path="url(#a4)">
<rect x="868" y="1005" width="48" height="48" fill="#92a5b8"/>
<path d="M878 1053C879 1044 884 1040 892 1040 900 1041 906 1045 908 1053Z" fill="#ececec"/>
<path d="M878 1018C882 1006 902 1004 904 1016 906 1022 900 1028 898 1026 897 1018 890 1014 878 1018Z" fill="#2e2320"/>
<path d="M880 1020C885 1014 896 1016 898 1024 898 1034 894 1041 888 1041 882 1038 880 1030 880 1020Z" fill="#eebca5"/>
<circle cx="884" cy="1026" r="3.200" fill="none" stroke="#333" stroke-width=".9"/><circle cx="893" cy="1026" r="3.200" fill="none" stroke="#333" stroke-width=".9"/>
<path d="M884 1036h4" stroke="#c8344a" stroke-width="1.400"/>
<path d="M891 1042v11M895 1042v11" stroke="#a55" stroke-width=".9"/>
</g>

<text x="956.700" y="772" class="f16 b k" style="font-size:16px" textLength="76.800">Zach King</text>
<g class="f12 m u"><text x="968.800" y="820" textLength="27">Date</text><text x="1276.600" y="820" textLength="34.800">Views</text><text x="1465.700" y="820" textLength="29.700">Likes</text><text x="1616.600" y="820" textLength="62.400">Comments</text><text x="1830.800" y="820" textLength="32.700">Share</text></g>
<g stroke="#f4f3f5" stroke-width="1.500"><path d="M956 832H1876M956 896H1876M956 960H1876M956 1024H1876M956 1088H1876"/></g>

<g fill="#e4f1fb">
<rect x="1152" y="855" width="48" height="16" rx="1.500"/><rect x="1336" y="855" width="27" height="16" rx="1.500"/><rect x="1520" y="855" width="31" height="16" rx="1.500"/><rect x="1704" y="855" width="24" height="16" rx="1.500"/>
<rect x="1152" y="919" width="66" height="16" rx="1.500"/><rect x="1336" y="919" width="46" height="16" rx="1.500"/><rect x="1520" y="919" width="60" height="16" rx="1.500"/><rect x="1704" y="919" width="59" height="16" rx="1.500"/>
<rect x="1152" y="983" width="86" height="16" rx="1.500"/><rect x="1336" y="983" width="83" height="16" rx="1.500"/><rect x="1520" y="983" width="108" height="16" rx="1.500"/><rect x="1704" y="983" width="80" height="16" rx="1.500"/>
<rect x="1152" y="1047" width="122" height="16" rx="1.500"/><rect x="1336" y="1047" width="135" height="16" rx="1.500"/><rect x="1520" y="1047" width="135" height="16" rx="1.500"/><rect x="1704" y="1047" width="140" height="16" rx="1.500"/>
</g>
<g class="f14 d">
<text x="970.500" y="868.500" textLength="85.500">Mar 10, 2024</text><text x="1273.500" y="868.500" textLength="38">6,456</text><text x="1470.200" y="868.500" textLength="25.200">495</text><text x="1663.400" y="868.500" textLength="15.600">24</text><text x="1848.300" y="868.500" textLength="15.200">13</text>
<text x="970.500" y="932.500" textLength="79.500">Mar 9, 2024</text><text x="1276.300" y="932.500" textLength="35.100">7,988</text><text x="1471" y="932.500" textLength="24.400">676</text><text x="1663.400" y="932.500" textLength="15.600">59</text><text x="1846.600" y="932.500" textLength="16.900">44</text>
<text x="970.500" y="996.500" textLength="79.500">Mar 8, 2024</text><text x="1277.300" y="996.500" textLength="34.100">9,751</text><text x="1460" y="996.500" textLength="35.400">1,398</text><text x="1663" y="996.500" textLength="16">88</text><text x="1847.300" y="996.500" textLength="16.200">59</text>
<text x="970.500" y="1060.500" textLength="77.500">Mar 7, 2024</text><text x="1268" y="1060.500" textLength="43.400">15,082</text><text x="1458" y="1060.500" textLength="37.400">2,045</text><text x="1656" y="1060.500" textLength="23">123</text><text x="1846.600" y="1060.500" textLength="16.900">84</text>
</g>
</svg>
</body></html>
